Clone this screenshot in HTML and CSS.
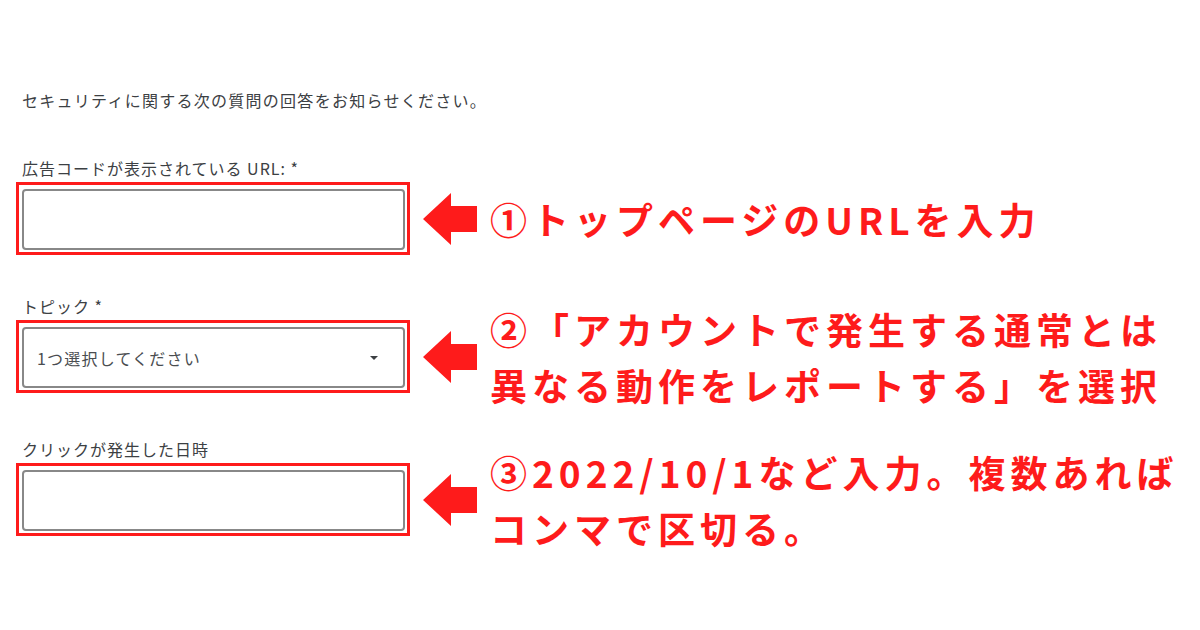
FILE: index.html
```html
<!DOCTYPE html>
<html lang="ja">
<head>
<meta charset="utf-8">
<link rel="stylesheet" href="styles.css">
</head>
<body>
<div class="page">
  <p class="intro">セキュリティに関する次の質問の回答をお知らせください。</p>

  <div class="field field-1">
    <div class="label">広告コードが表示されている URL: *</div>
    <div class="row">
      <div class="frame"><div class="input"></div></div>
      <div class="note">
        <svg class="arrow" width="54" height="52" viewBox="0 0 54 52"><polygon points="0,26 28,0 28,13 54,13 54,39 28,39 28,52" fill="#fe1b1b"/></svg>
        <div class="note-text">①トップページのURLを入力</div>
      </div>
    </div>
  </div>

  <div class="field field-2">
    <div class="label">トピック *</div>
    <div class="row">
      <div class="frame"><div class="input select"><span class="select-text">1つ選択してください</span><span class="caret"></span></div></div>
      <div class="note">
        <svg class="arrow" width="54" height="52" viewBox="0 0 54 52"><polygon points="0,26 28,0 28,13 54,13 54,39 28,39 28,52" fill="#fe1b1b"/></svg>
        <div class="note-text">②「アカウントで発生する通常とは<br>異なる動作をレポートする」を選択</div>
      </div>
    </div>
  </div>

  <div class="field field-3">
    <div class="label">クリックが発生した日時</div>
    <div class="row">
      <div class="frame"><div class="input"></div></div>
      <div class="note">
        <svg class="arrow" width="54" height="52" viewBox="0 0 54 52"><polygon points="0,26 28,0 28,13 54,13 54,39 28,39 28,52" fill="#fe1b1b"/></svg>
        <div class="note-text">③2022/10/1など入力。複数あれば<br>コンマで区切る。</div>
      </div>
    </div>
  </div>
</div>
</body>
</html>
```

FILE: styles.css
```css
html, body {
  margin: 0;
  padding: 0;
  background: #ffffff;
}

body {
  width: 1200px;
  height: 630px;
  overflow: hidden;
  font-family: "Noto Sans CJK JP", "Noto Sans", sans-serif;
}

.page {
  padding: 88px 0 0 16px;
}

.intro {
  margin: 0;
  padding-left: 6px;
  font-size: 16px;
  line-height: 24px;
  letter-spacing: 1.27px;
  color: #3c4043;
}

.field {
  display: flex;
  flex-direction: column;
}

.field-1 { margin-top: 46px; }
.field-2 { margin-top: 41px; }
.field-3 { margin-top: 46px; }

.label {
  padding-left: 6px;
  font-size: 16px;
  line-height: 20px;
  letter-spacing: 1px;
  color: #3c4043;
  margin-bottom: 4px;
}

.row {
  display: flex;
  align-items: center;
}

.frame {
  width: 383px;
  border: 3px solid #fe1b1b;
  padding: 4px 2px 2px 3px;
  flex-shrink: 0;
}

.input {
  height: 57px;
  border: 2px solid #888888;
  border-radius: 4px;
  background: #ffffff;
}

.select {
  display: flex;
  align-items: center;
  justify-content: space-between;
  padding: 0 25px 0 13px;
}

.select-text {
  font-size: 16px;
  letter-spacing: 1.2px;
  color: #4a4d50;
}

.caret {
  width: 0;
  height: 0;
  border-left: 4px solid transparent;
  border-right: 4px solid transparent;
  border-top: 4px solid #3c4043;
}

.note {
  display: flex;
  align-items: center;
  margin: -30px 0 -30px 13px;
}

.arrow {
  flex-shrink: 0;
  display: block;
}

.note-text {
  margin-left: 13px;
  font-size: 37px;
  line-height: 56px;
  font-weight: 700;
  letter-spacing: 5px;
  color: #fe1b1b;
  white-space: nowrap;
}
```
